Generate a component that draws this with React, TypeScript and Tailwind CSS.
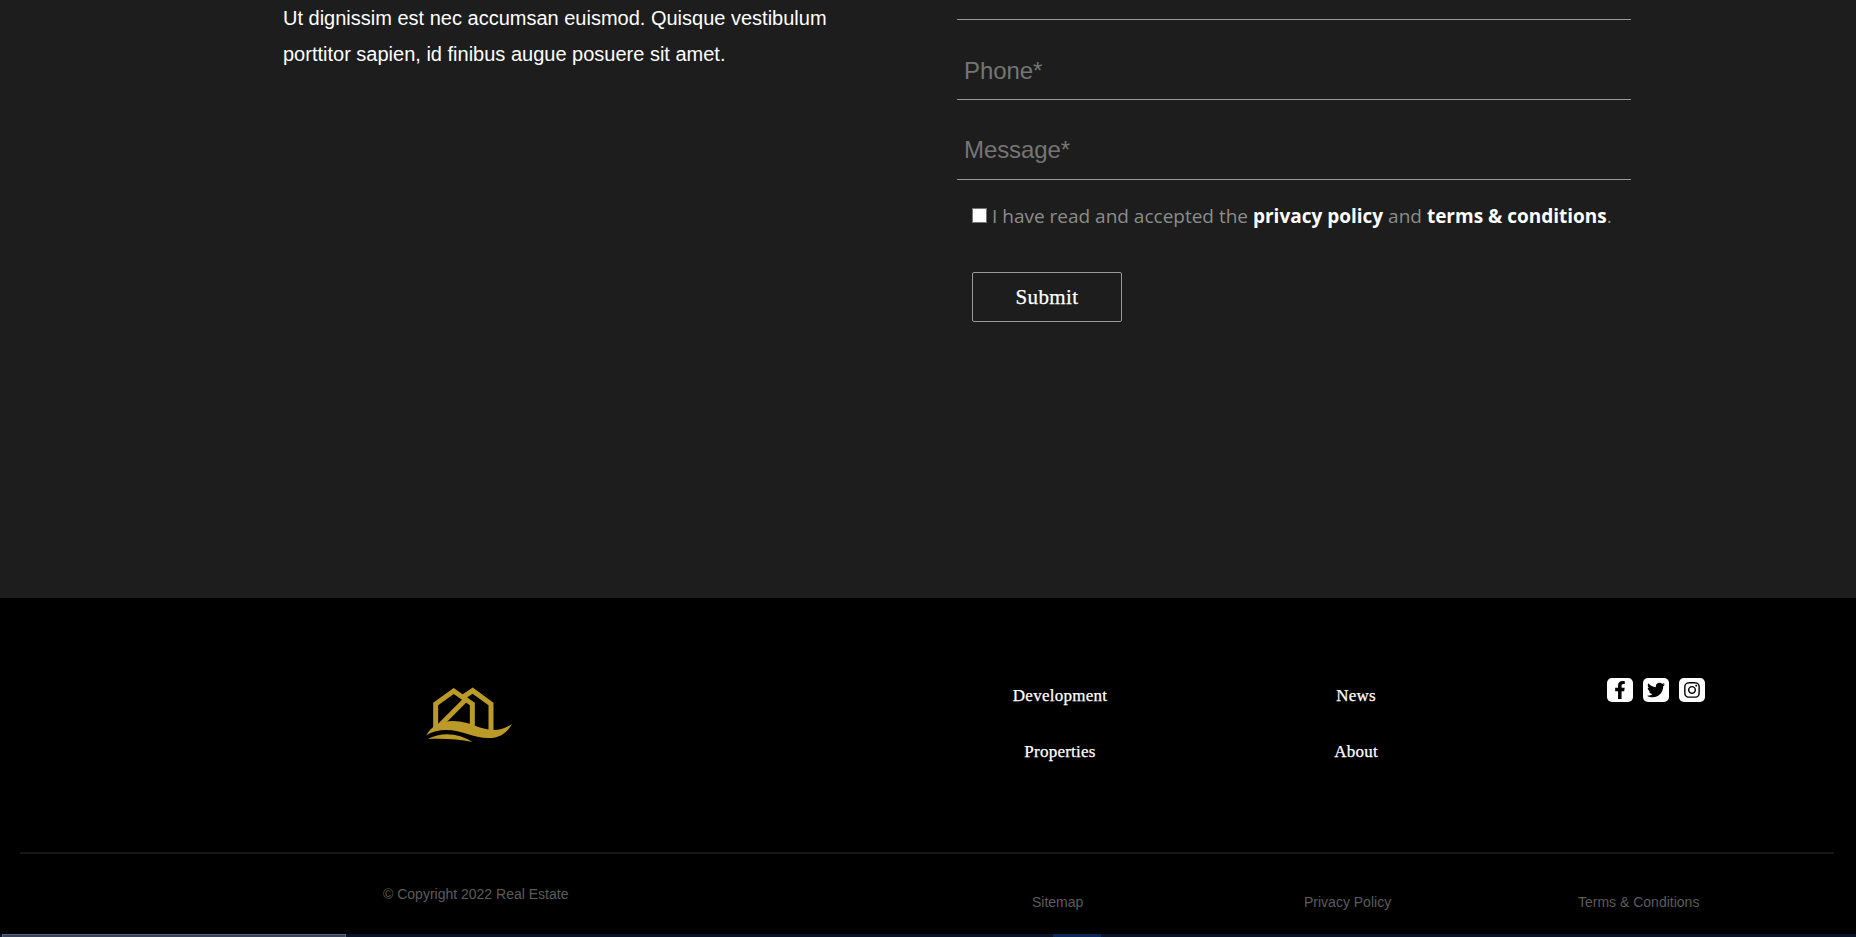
import { FaFacebookF, FaTwitter, FaInstagram } from "react-icons/fa";

const sans = "font-['Liberation_Sans',Arial,sans-serif]";
const serif = "font-['Liberation_Serif',serif] [-webkit-text-stroke:0.25px_white]";

function Field({ label, offset }: { label: string; offset: string }) {
  return (
    <input
      type="text"
      placeholder={label}
      className={`${sans} ${offset} block h-20 w-full border-b border-[#999999] bg-transparent px-[7px] text-[24px] leading-[38px] tracking-[-0.1px] text-white outline-none placeholder:text-[#757575]`}
    />
  );
}

function Logo() {
  return (
    <svg viewBox="0 0 360 270" className="block h-[90px] w-[120px]" fill="none">
      <g stroke="#bb9a27" strokeWidth="15">
        <path d="M77 182V102L131 63L187 102V172" />
        <path d="M86 170L165 91M158 82L188 62L243 102V185" />
      </g>
      <g fill="#bb9a27">
        <path d="M49 196C62 170 90 153 130 153C180 153 210 180 250 180C272 180 288 174 306 162C290 190 268 204 235 204C190 204 155 180 110 180C86 180 68 184 49 196Z" />
        <path d="M53 207C95 184 148 189 187 216C145 207 100 205 53 207Z" />
      </g>
    </svg>
  );
}

export default function App() {
  return (
    <div className="flex h-[937px] w-full flex-col overflow-hidden bg-black">
      <section className="flex h-[598px] shrink-0 bg-[#1d1d1d]">
        <p className={`${sans} w-[673px] shrink-0 pl-[283px] text-[20px] leading-9 whitespace-nowrap text-white`}>
          <span className="block">Ut dignissim est nec accumsan euismod. Quisque vestibulum</span>
          <span className="block">porttitor sapien, id finibus augue posuere sit amet.</span>
        </p>
        <form className="ml-[284px] w-[674px] shrink-0">
          <div className="h-5 border-b border-[#999999]" />
          <Field label="Phone*" offset="pt-[23px]" />
          <Field label="Message*" offset="pt-[21px]" />
          <label className="ml-[15px] flex h-[72px] items-center font-['Open_Sans',sans-serif] text-[19px] whitespace-nowrap text-[#8c8c8c]">
            <input type="checkbox" className="mr-[5px] mb-[2px] size-[15px] shrink-0 appearance-none border border-[#767676] bg-white" />
            <span>
              I have read and accepted the <b className="text-white">privacy policy</b> and{" "}
              <b className="text-white">terms &amp; conditions</b>.
            </span>
          </label>
          <button type="button" className={`${serif} mt-5 ml-[15px] block h-[50px] w-[150px] rounded-[2px] border border-[#999999] pt-px text-[21px] tracking-[0.4px] text-white`}>
            Submit
          </button>
        </form>
      </section>
      <footer className="flex h-[336px] shrink-0 flex-col">
        <div className="flex h-[254px] pt-[72px]">
          <div className="w-[960px] shrink-0 pl-[410px]"><Logo /></div>
          <nav className={`${serif} flex pt-[14px] text-center text-[17px] leading-6 tracking-[0.25px] text-white`}>
            <div className="flex w-[200px] flex-col gap-8"><a>Development</a><a>Properties</a></div>
            <div className="ml-24 flex w-[200px] flex-col gap-8"><a>News</a><a>About</a></div>
          </nav>
          <div className="ml-[151px] flex gap-[10px] pt-2 text-black">
            <span className="flex h-6 w-[26px] items-center justify-center rounded-[5px] bg-white"><FaFacebookF size={18} /></span>
            <span className="flex h-6 w-[26px] items-center justify-center rounded-[5px] bg-white"><FaTwitter size={18} /></span>
            <span className="flex h-6 w-[26px] items-center justify-center rounded-[5px] bg-white"><FaInstagram size={18} /></span>
          </div>
        </div>
        <div className="mr-[22px] ml-5 h-[2px] bg-[#171717]" />
        <div className={`${sans} flex pt-8 text-[14px] leading-4 whitespace-nowrap text-[#5c5c5c]`}>
          <span className="ml-[383px] w-[649px]">© Copyright 2022 Real Estate</span>
          <span className="w-[272px] pt-2">Sitemap</span>
          <span className="w-[274px] pt-2">Privacy Policy</span>
          <span className="pt-2">Terms &amp; Conditions</span>
        </div>
      </footer>
      <div className="flex h-[3px] shrink-0 bg-[#091428] pl-[2px]">
        <div className="h-[3px] w-[344px] border border-b-0 border-[#5b6474] bg-[#39445a]" />
        <div className="ml-[707px] h-[3px] w-12 bg-[#062a5c]" />
      </div>
    </div>
  );
}
